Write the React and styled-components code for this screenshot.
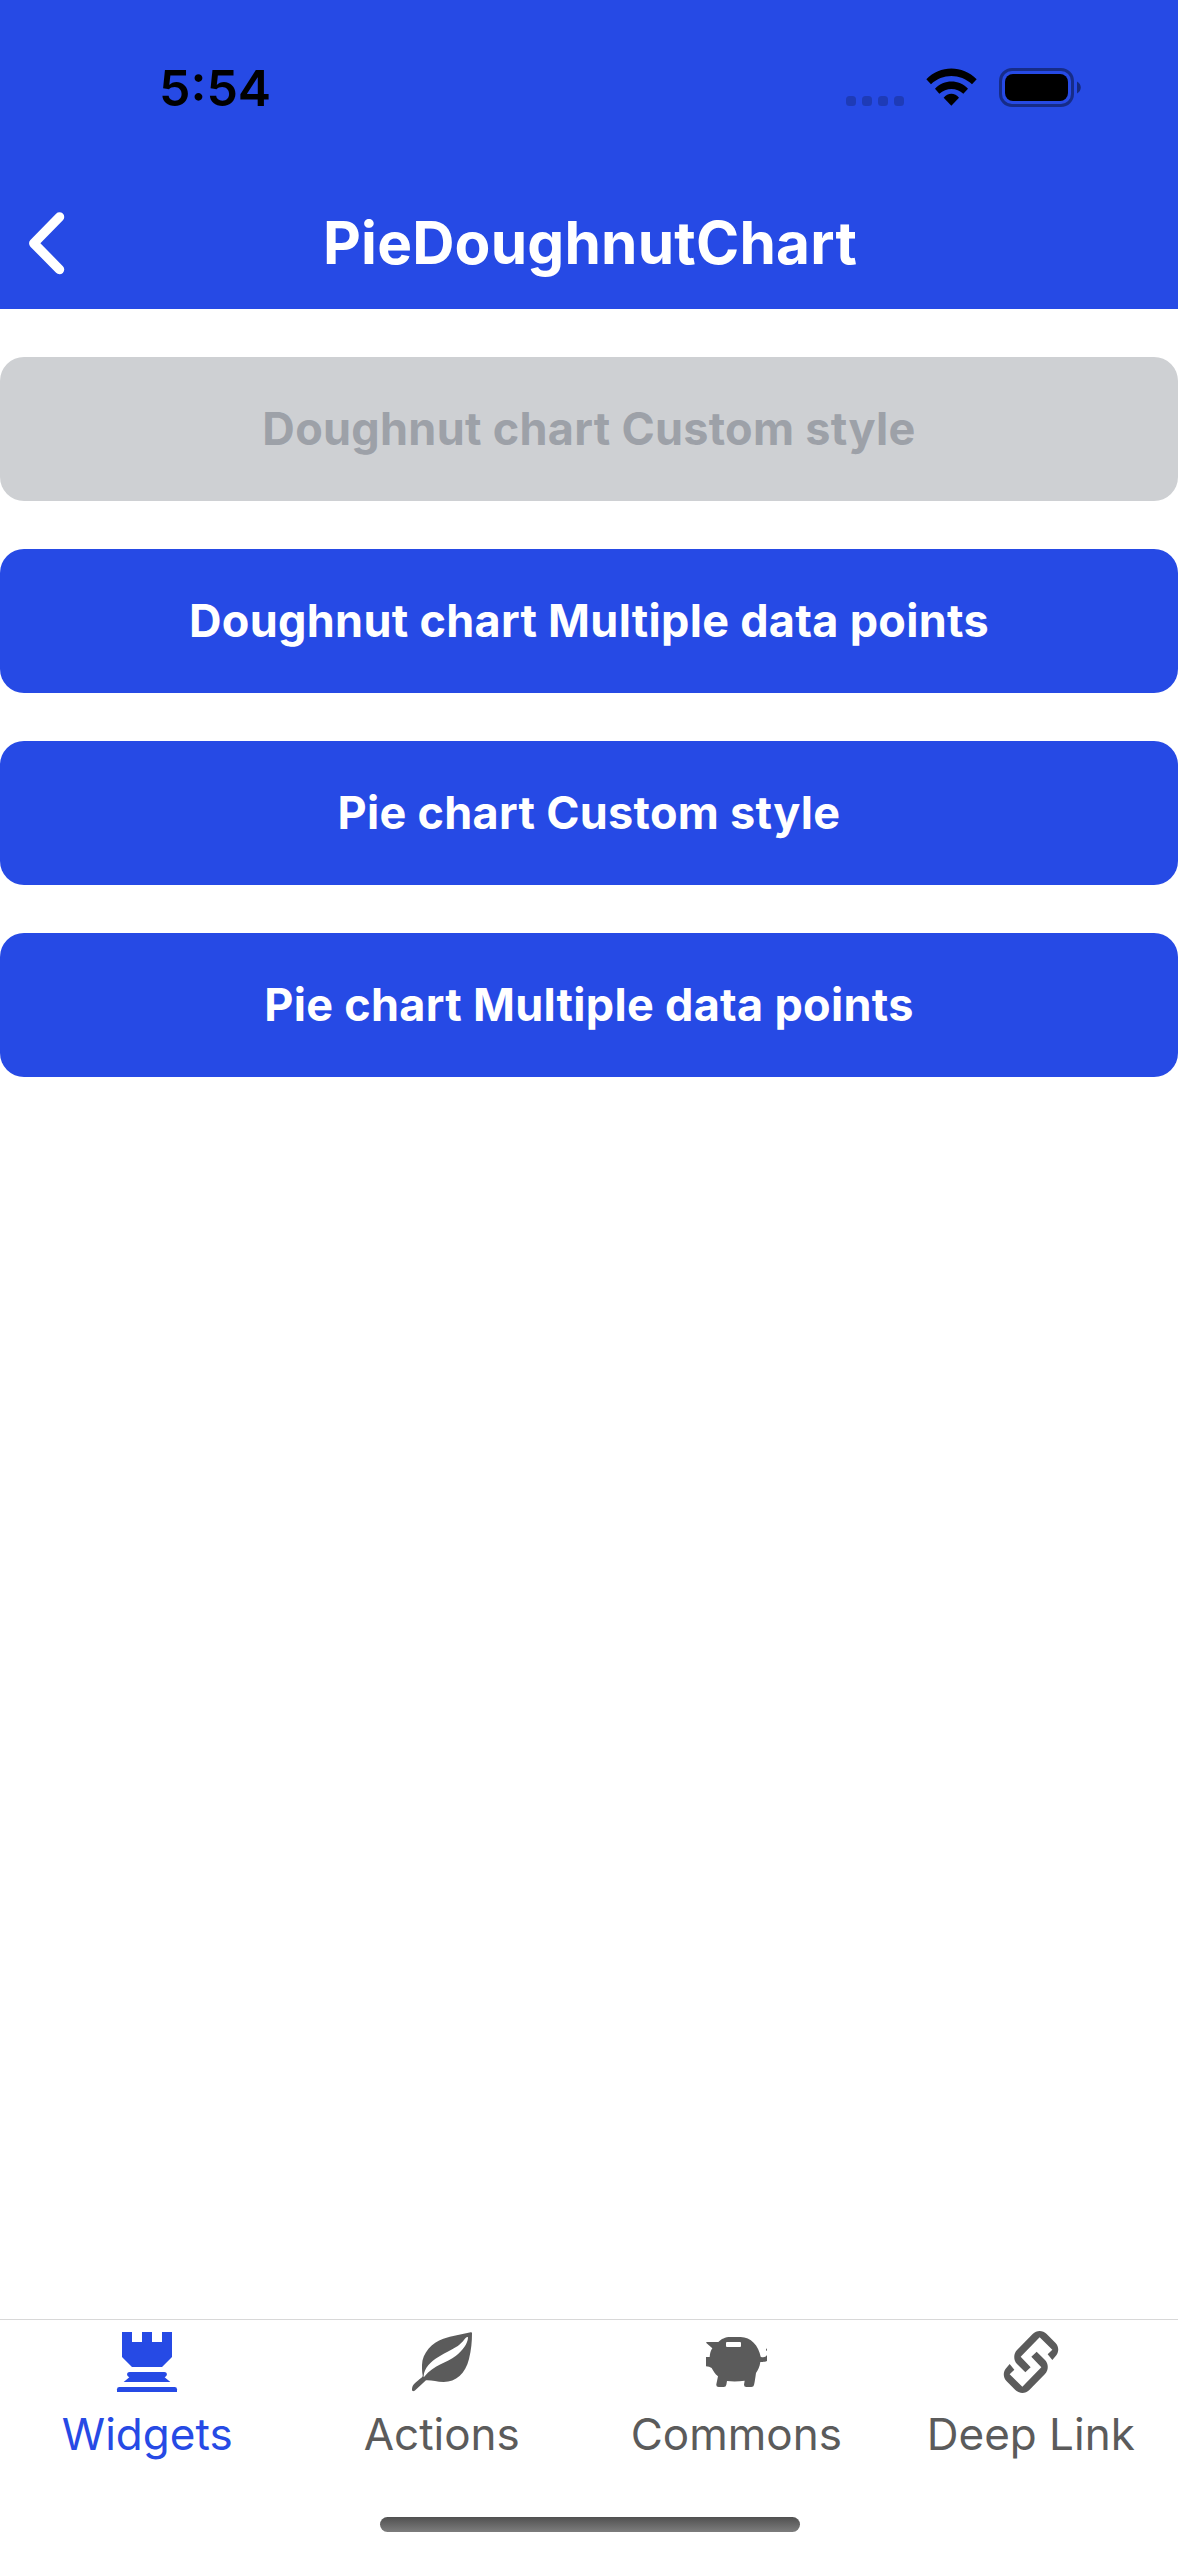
import React from "react";
import styled, { createGlobalStyle } from "styled-components";

const brand = "#264ae5";
const muted = "#5b5b5b";

const GlobalStyle = createGlobalStyle`
  *, *::before, *::after { box-sizing: border-box; }
  body {
    margin: 0;
    background: #fff;
    font-family: Inter, "Liberation Sans", sans-serif;
  }
`;

const Screen = styled.div`
  display: flex;
  flex-direction: column;
  width: 100%;
  height: 2556px;
  background: #fff;
`;

const StatusBar = styled.div`
  display: flex;
  justify-content: space-between;
  align-items: center;
  height: 177px;
  padding: 0 97px 2px 159px;
  background: ${brand};
  color: #000;
`;

const Time = styled.span`
  font-size: 50px;
  font-weight: 600;
  line-height: 60px;
`;

const StatusIcons = styled.div`
  display: flex;
  align-items: flex-end;
  gap: 22px;
`;

const Dots = styled.div`
  display: flex;
  gap: 6px;
  margin-bottom: 1px;
`;

const Dot = styled.i`
  width: 10px;
  height: 10px;
  border-radius: 3.5px;
  background: rgba(0, 0, 0, 0.2);
`;

const WifiIcon = styled.svg`
  display: block;
  width: 51px;
  height: 38px;
  margin-bottom: 1px;
`;

const BatteryIcon = styled.svg`
  display: block;
  width: 82px;
  height: 39px;
`;

const Header = styled.header`
  display: grid;
  grid-template-columns: 100px 1fr 100px;
  align-items: center;
  height: 132px;
  background: ${brand};
  color: #fff;
`;

const BackButton = styled.button`
  display: flex;
  align-items: center;
  height: 132px;
  padding: 0 0 0 28px;
  border: 0;
  background: none;
  color: inherit;
`;

const Title = styled.h1`
  margin: 0;
  padding-left: 2px;
  font-size: 58.5px;
  font-weight: 700;
  line-height: 72px;
  letter-spacing: 0.2px;
  text-align: center;
`;

const Content = styled.main`
  display: flex;
  flex: 1;
  flex-direction: column;
  gap: 48px;
  padding-top: 48px;
`;

const ActionButton = styled.button`
  width: 100%;
  height: 144px;
  padding: 0 0 2px;
  border: 0;
  border-radius: 24px;
  background: ${(p) => (p.disabled ? "#ced0d3" : brand)};
  color: ${(p) => (p.disabled ? "#9da1a8" : "#fff")};
  font-family: inherit;
  font-size: 45px;
  font-weight: 700;
  letter-spacing: 0.29px;
`;

const TabBar = styled.nav`
  display: grid;
  grid-template-columns: repeat(4, 1fr);
  height: 198px;
  padding-top: 12px;
  border-top: 1px solid #d8d8d8;
`;

const Tab = styled.div`
  display: flex;
  flex-direction: column;
  align-items: center;
  gap: 15px;
  color: ${(p) => (p.$active ? brand : muted)};
`;

const TabIcon = styled.svg`
  display: block;
  width: 60px;
  height: 60px;
  overflow: visible;
  fill: currentColor;
`;

const TabLabel = styled.span`
  font-size: 44px;
  line-height: 54px;
  white-space: nowrap;
`;

const HomeArea = styled.div`
  display: flex;
  justify-content: center;
  height: 39px;
  padding-left: 2px;
`;

const HomeIndicator = styled.div`
  width: 420px;
  height: 15px;
  border-radius: 8px;
  background: linear-gradient(#505050, #7d7d7d);
`;

const icons = {
  rook: (
    <TabIcon viewBox="351 96 180 180">
      <path d="M366 96H396V126H426V96H456V126H486V96H516V171L486 201H396L366 171Z" />
      <path d="M389 216H493C502 216 504 227 494 232L511 246H371L388 232C378 227 380 216 389 216Z" />
      <path d="M351 276V268Q351 261 358 261H524Q531 261 531 268V276Z" />
    </TabIcon>
  ),
  leaf: (
    <TabIcon viewBox="336 96 180 180">
      <path d="M512 97Q516 96 516 100C516 125 514 150 507 177C496 221 468 246 431 246C410 246 395 240 378 241L344 272Q336 276 336 269C336 255 345 249 355 241C365 233 368 232 368 226C366 215 366 207 366 195C367 158 396 128 430 116C455 108 485 104 512 97ZM502 111C496 111 492 123 478 134C450 156 374 178 371 229C370 232 373 231 374 229C400 195 440 189 468 167C488 151 503 131 504 113Q504 110 502 111Z" />
    </TabIcon>
  ),
  piggy: (
    <TabIcon viewBox="321 96 180 180">
      <path
        fillRule="evenodd"
        d="M322 126H358C367 117 378 111 395 111H425C455 111 479 137 485 170C492 173 500 172 504 165V183C497 187 491 185 484 186C482 201 477 210 471 219C469 232 468 243 465 255Q464 261 457 261H442Q435 261 435 254L437 242Q410 246 384 243L382 254Q381 261 374 261H359Q351 261 352 253L357 229C348 222 342 212 338 204Q331 200 321 199V171H332C333 160 335 152 340 145L322 129ZM384 126Q381 126 381 129V138Q381 141 384 141H423Q426 141 426 138V129Q426 126 423 126Z"
      />
      <path d="M504 145L501 148V151L504 153Z" />
    </TabIcon>
  ),
  link: (
    <TabIcon viewBox="369 96 180 180">
      <path d="M523 180L509 163L523 149L485 112L428 170L458 202L442 217L417 192C406 181 406 161 417 150L464 102C476 90 494 90 506 102L532 128C543 139 543 155 535 166Z" />
      <path d="M395 192L409 209L395 223L433 260L490 202L460 170L476 155L501 180C512 191 512 211 501 222L454 270C442 282 424 282 412 270L386 244C375 233 375 217 383 206Z" />
    </TabIcon>
  ),
};

const actions = [
  { label: "Doughnut chart Custom style", disabled: true },
  { label: "Doughnut chart Multiple data points" },
  { label: "Pie chart Custom style" },
  { label: "Pie chart Multiple data points" },
];

const tabs = [
  { label: "Widgets", icon: "rook", active: true },
  { label: "Actions", icon: "leaf" },
  { label: "Commons", icon: "piggy" },
  { label: "Deep Link", icon: "link" },
];

export default function App() {
  return (
    <>
      <GlobalStyle />
      <Screen>
        <StatusBar>
          <Time>5:54</Time>
          <StatusIcons>
            <Dots>
              <Dot />
              <Dot />
              <Dot />
              <Dot />
            </Dots>
            <WifiIcon viewBox="378 115 153 114">
              <path d="M379 149C420 106 488 106 530 149L516 164C481 131 427 131 393 164Z" />
              <path d="M405 177C432 148 477 148 504 177L490 192C470 173 439 173 418 192Z" />
              <path d="M454 228L431 204C443 188 465 188 477 204Z" />
            </WifiIcon>
            <BatteryIcon viewBox="0 0 82 39">
              <rect x="1.5" y="1.5" width="72" height="36" rx="11.5" fill="none" stroke="#000" strokeOpacity="0.4" strokeWidth="3" />
              <rect x="6" y="6" width="63" height="27" rx="8" />
              <path d="M78 13.5C83 16 83 23 78 25.5Z" fillOpacity="0.45" />
            </BatteryIcon>
          </StatusIcons>
        </StatusBar>
        <Header>
          <BackButton aria-label="Back">
            <svg width="38" height="64" viewBox="0 0 38 64" fill="none" stroke="currentColor" strokeWidth="9.5" strokeLinecap="round" strokeLinejoin="round">
              <path d="M31.5 6L5.8 32.3L31.5 58.5" />
            </svg>
          </BackButton>
          <Title>PieDoughnutChart</Title>
        </Header>
        <Content>
          {actions.map((a) => (
            <ActionButton key={a.label} disabled={a.disabled}>
              {a.label}
            </ActionButton>
          ))}
        </Content>
        <TabBar>
          {tabs.map((t) => (
            <Tab key={t.label} $active={t.active}>
              {icons[t.icon]}
              <TabLabel>{t.label}</TabLabel>
            </Tab>
          ))}
        </TabBar>
        <HomeArea>
          <HomeIndicator />
        </HomeArea>
      </Screen>
    </>
  );
}
